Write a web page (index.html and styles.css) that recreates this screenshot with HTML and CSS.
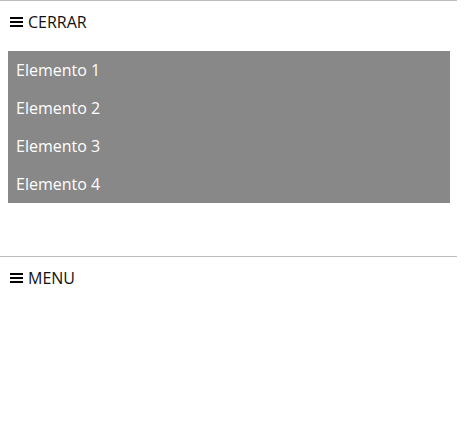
FILE: index.html
```html
<!DOCTYPE html>
<html lang="es">
<head>
<meta charset="utf-8">
<link rel="stylesheet" href="styles.css">
</head>
<body>
<nav class="nav">
  <div class="toggle">
    <span class="burger"><i></i><i></i><i></i></span>
    <span class="label label-close">CERRAR</span>
  </div>
  <ul class="menu">
    <li>Elemento 1</li>
    <li>Elemento 2</li>
    <li>Elemento 3</li>
    <li>Elemento 4</li>
  </ul>
</nav>
<nav class="nav nav-closed">
  <div class="toggle">
    <span class="burger"><i></i><i></i><i></i></span>
    <span class="label">MENU</span>
  </div>
</nav>
</body>
</html>
```
FILE: styles.css
```css
html, body {
  margin: 0;
  padding: 0;
  background: #fff;
}
body {
  font-family: "Open Sans", "Liberation Sans", sans-serif;
  font-size: 16px;
  color: #000;
  width: 457px;
}
.nav {
  border-top: 1px solid #bbb;
}
.toggle {
  display: flex;
  align-items: center;
  gap: 5px;
  padding: 10px 10px;
  height: 22px;
  line-height: 22px;
}
.burger {
  display: flex;
  flex-direction: column;
  justify-content: space-between;
  width: 13px;
  height: 10px;
}
.burger i {
  display: block;
  height: 2px;
  background: #000;
}
.label {
  color: #111;
}
.menu {
  list-style: none;
  margin: 8px 7px 53px 8px;
  padding: 0;
  background: #888;
}
.menu li {
  color: #fff;
  padding: 0 8px;
  height: 38px;
  line-height: 38px;
}
.nav-closed {
  height: 167px;
}
```
